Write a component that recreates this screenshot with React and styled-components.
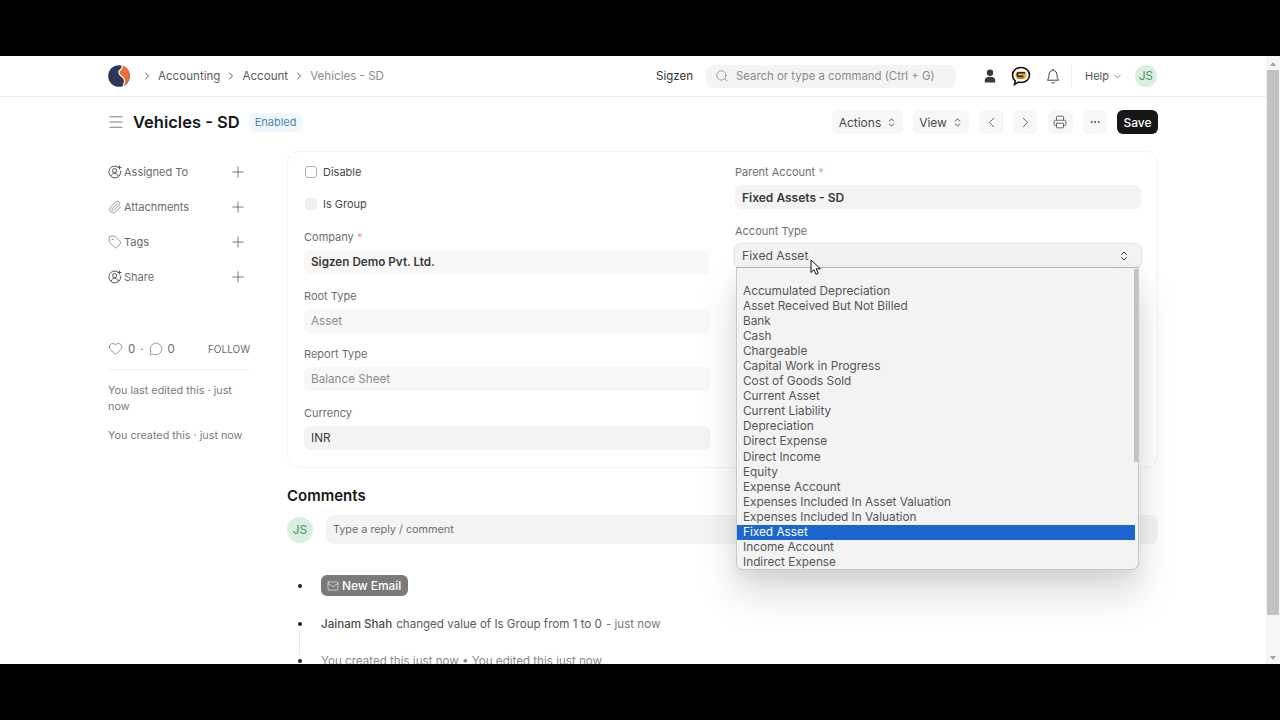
import React from 'react';
import styled, { createGlobalStyle } from 'styled-components';
import {
  ChevronDown, ChevronLeft, ChevronRight, ChevronsUpDown, Heart, Mail, Menu,
  MessageCircle, MoreHorizontal, Paperclip, Plus, Printer, Search, Tag,
} from 'lucide-react';

const GlobalStyle = createGlobalStyle`
  html, body { margin: 0; padding: 0; height: 100%; background: #000; }
  #root { height: 100%; }
  * { box-sizing: border-box; }
  body { font-family: Inter, "Liberation Sans", sans-serif; font-size: 12px; color: #525252; }
`;

const Frame = styled.div`
  width: 1280px;
  height: 720px;
  display: flex;
  flex-direction: column;
  background: #000;
  overflow: hidden;
`;

const Letterbox = styled.div`
  height: 56px;
  flex: none;
  background: #000;
`;

const Viewport = styled.div`
  height: 608px;
  display: flex;
  background: #fff;
  overflow: hidden;
`;

const Content = styled.div`
  flex: 1;
  min-width: 0;
`;

const Scrollbar = styled.div`
  width: 14px;
  flex: none;
  background: #f5f5f5;
  display: flex;
  flex-direction: column;
  align-items: center;
  padding: 6px 1px 4px;
`;

const ScrollArrow = styled.div`
  width: 0;
  height: 0;
  border-left: 3px solid transparent;
  border-right: 3px solid transparent;
  ${p => p.$down ? 'border-top: 4px solid #a3a3a3;' : 'border-bottom: 4px solid #a3a3a3;'}
`;

const ScrollThumb = styled.div`
  width: 12px;
  height: 545px;
  margin: 4px 0 auto;
  background: #c2c2c2;
`;

const Navbar = styled.header`
  height: 41px;
  display: flex;
  align-items: center;
  padding: 0 109px 0 108px;
  border-bottom: 1px solid #ededed;
`;

const Logo = styled.svg`
  width: 22px;
  height: 22px;
  flex: none;
  margin-right: 11px;
`;

const Crumb = styled.a`
  display: flex;
  align-items: center;
  gap: 5px;
  margin-right: 5px;
  font-size: 11.6px;
  color: ${p => p.$current ? '#8c8c8c' : '#5c5c5c'};

  svg { color: #525252; }
`;

const NavRight = styled.div`
  margin-left: auto;
  display: flex;
  align-items: center;
`;

const Company = styled.span`
  color: #333;
  font-size: 11.5px;
  margin-right: 13px;
`;

const SearchBox = styled.div`
  width: 250px;
  height: 23px;
  display: flex;
  align-items: center;
  gap: 7px;
  padding-left: 9px;
  margin-right: 27px;
  border-radius: 8px;
  background: #f4f4f4;
  color: #8a8a8a;
  font-size: 11.4px;
`;

const NavIcons = styled.div`
  display: flex;
  align-items: center;
  gap: 14px;
  padding-right: 10px;
  margin-right: 13px;
  height: 24px;
  border-right: 1px solid #f0f0f0;
`;

const HelpLink = styled.span`
  display: flex;
  align-items: center;
  gap: 3px;
  margin-right: 12px;
  color: #525252;
  font-size: 11px;
`;

const Avatar = styled.div`
  width: ${p => p.$size}px;
  height: ${p => p.$size}px;
  flex: none;
  border-radius: 50%;
  background: #d9efe0;
  color: #4b8f6a;
  display: flex;
  align-items: center;
  justify-content: center;
  font-size: ${p => p.$size > 24 ? 12 : 11.5}px;
`;

const PageHead = styled.div`
  height: 50px;
  display: flex;
  align-items: center;
  padding: 0 108px 0 107px;
`;

const Title = styled.h1`
  margin: 0 9px 0 8px;
  font-size: 16.5px;
  font-weight: 600;
  color: #171717;
`;

const Badge = styled.span`
  height: 19px;
  padding: 0 6px;
  display: flex;
  align-items: center;
  border-radius: 6px;
  background: #f1f8fd;
  color: #4d87b5;
  font-size: 11px;
`;

const Actions = styled.div`
  margin-left: auto;
  display: flex;
  align-items: center;
  gap: 9.6px;
`;

const Button = styled.button`
  height: 24px;
  width: ${p => p.$width}px;
  padding: 0;
  display: flex;
  align-items: center;
  justify-content: center;
  gap: 5px;
  border: 0;
  border-radius: 6px;
  background: ${p => p.$primary ? '#171717' : '#f7f7f7'};
  color: ${p => p.$primary ? '#fff' : '#4a4a4a'};
  font: ${p => p.$primary ? 500 : 400} 12px Inter, sans-serif;
`;

const Layout = styled.div`
  display: flex;
  padding-left: 108px;
  width: 1158px;
`;

const Sidebar = styled.aside`
  width: 142px;
  flex: none;
  margin-right: 37px;
  padding-top: 16px;
`;

const SideRow = styled.div`
  height: 18px;
  margin-bottom: 17px;
  display: flex;
  align-items: center;
  font-size: 11px;
  color: #6b6b6b;

  & > svg:first-child { margin-right: 2px; flex: none; }
  & > svg:last-child { margin-left: auto; margin-right: 3px; color: #525252; }
`;

const Stats = styled.div`
  margin-top: 55px;
  padding-bottom: 13px;
  display: flex;
  align-items: center;
  color: #6b6b6b;
  font-size: 11.5px;
  border-bottom: 1px solid #f0f0f0;

  svg { margin-right: 5px; }
`;

const Dot = styled.span`
  margin: 0 5px;
`;

const Follow = styled.span`
  margin-left: auto;
  font-size: 10px;
  color: #6b6b6b;
`;

const SideNote = styled.p`
  margin: 13px 0 0;
  font-size: 10.8px;
  line-height: 16px;
  color: #7a7a7a;
`;

const Main = styled.main`
  flex: 1;
  min-width: 0;
`;

const Card = styled.section`
  height: 317px;
  margin-top: 4px;
  padding: 11px 16px;
  display: grid;
  grid-template-columns: 406px 406px;
  column-gap: 25px;
  border: 1px solid #f5f5f5;
  border-radius: 12px;
`;

const Column = styled.div`
  display: flex;
  flex-direction: column;
  padding-top: ${p => p.$top ?? 0}px;
`;

const CheckRow = styled.label`
  height: 18px;
  margin-bottom: ${p => p.$gap}px;
  padding-left: 1px;
  display: flex;
  align-items: center;
  gap: 6px;
  font-size: 11px;
  color: #4a4a4a;
`;

const CheckBox = styled.span`
  width: 12px;
  height: 12px;
  border-radius: 3px;
  background: ${p => p.$disabled ? '#f0f0f0' : '#fff'};
  border: 1px solid ${p => p.$disabled ? '#f0f0f0' : '#b0b0b0'};
`;

const Field = styled.div`
  position: relative;
  margin-bottom: ${p => p.$gap ?? 13.6}px;
`;

const Label = styled.div`
  height: 16px;
  line-height: 16px;
  margin-bottom: 5px;
  font-size: 11px;
  color: #6e6e6e;

  b { color: #e79a9a; font-weight: 400; }
`;

const Input = styled.div`
  height: 24px;
  padding: 0 7px;
  display: flex;
  align-items: center;
  justify-content: space-between;
  border-radius: 6px;
  background: ${p => p.$light ? '#f8f8f8' : '#f4f4f4'};
  color: ${p => p.$muted ? '#8c8c8c' : '#383838'};
  font-size: ${p => p.$large ? 12 : 11.7}px;
  font-weight: ${p => p.$bold ? 600 : 400};
`;

const SelectBox = styled(Input)`
  height: 23px;
  background: #f3f3f3;
  color: #525252;
  font-size: 12.1px;
  padding-right: 11px;
  box-shadow: 0 0 0 1px #e4e4e4, 0 1px 3px rgba(0, 0, 0, 0.12);
`;

const Cursor = styled.svg`
  position: absolute;
  left: 75px;
  top: 36px;
  z-index: 6;
`;

const Dropdown = styled.div`
  position: absolute;
  z-index: 5;
  top: 44px;
  left: 1px;
  width: 403px;
  height: 303px;
  padding-top: 16px;
  overflow: hidden;
  border-radius: 0 0 7px 7px;
  background: #f3f3f3;
  border: 1px solid #c9c9c9;
  border-top-color: #b5b5b5;
  box-shadow: 0 24px 40px rgba(0, 0, 0, 0.14), 0 8px 16px rgba(0, 0, 0, 0.06);
`;

const DropdownThumb = styled.div`
  position: absolute;
  top: 1px;
  right: 0;
  width: 4px;
  height: 193px;
  background: #c4c4c4;
`;

const Option = styled.div`
  height: 15.05px;
  line-height: 15px;
  width: 398px;
  padding-left: 6px;
  font-size: 11.8px;
  color: ${p => p.$selected ? '#fff' : '#555'};
  background: ${p => p.$selected ? '#1b66d0' : 'transparent'};
`;

const SectionTitle = styled.h2`
  margin: 19px 0 10px;
  font-size: 15px;
  line-height: 18px;
  font-weight: 600;
  color: #171717;
`;

const CommentRow = styled.div`
  display: flex;
  align-items: center;
  gap: 13px;
`;

const CommentInput = styled.div`
  flex: 1;
  height: 29px;
  padding-left: 7px;
  display: flex;
  align-items: center;
  border-radius: 8px;
  background: #f4f4f4;
  color: #6e6e6e;
  font-size: 10.8px;
`;

const Timeline = styled.ul`
  list-style: none;
  margin: 31px 0 0;
  padding: 0;
`;

const TimelineItem = styled.li`
  position: relative;
  min-height: 21px;
  margin-bottom: ${p => p.$gap}px;
  padding-left: 34px;
  display: flex;
  align-items: center;
  font-size: 11.6px;
  color: ${p => p.$faded ? '#8a8a8a' : '#5c5c5c'};

  &::before {
    content: '';
    position: absolute;
    left: 11px;
    top: 9px;
    width: 4px;
    height: 4px;
    border-radius: 50%;
    background: #222;
  }
`;

const TimelineLine = styled.span`
  position: absolute;
  left: 12px;
  top: 16px;
  width: 1px;
  height: 26px;
  background: #e8e8e8;
`;

const EmailButton = styled.button`
  height: 21px;
  padding: 0 7px 0 6px;
  display: flex;
  align-items: center;
  gap: 3px;
  border: 0;
  border-radius: 6px;
  background: #7a7a7a;
  color: #fff;
  font: 500 11.9px Inter, sans-serif;
`;

const Strong = styled.span`
  font-weight: 500;
  color: #4a4a4a;
  margin-right: 4px;
`;

const Faded = styled.span`
  color: #7a7a7a;
  margin-left: 4px;
`;

const AccountTypes = [
  'Accumulated Depreciation', 'Asset Received But Not Billed', 'Bank', 'Cash', 'Chargeable',
  'Capital Work in Progress', 'Cost of Goods Sold', 'Current Asset', 'Current Liability',
  'Depreciation', 'Direct Expense', 'Direct Income', 'Equity', 'Expense Account',
  'Expenses Included In Asset Valuation', 'Expenses Included In Valuation', 'Fixed Asset',
  'Income Account', 'Indirect Expense',
];

function UserPlusIcon() {
  return (
    <svg width="14" height="14" viewBox="0 0 14 14" fill="none" stroke="#555" strokeWidth="1">
      <path d="M11 2.600A6 6 0 1 0 12.800 6" strokeLinecap="round" />
      <circle cx="6.600" cy="5.600" r="2.100" />
      <path d="M3 11c.8-1.800 2-2.600 3.600-2.600S9.500 9.200 10.200 11" />
      <path d="M11.500 1v3M10 2.500h3" strokeLinecap="round" />
    </svg>
  );
}

function ChatIcon() {
  return (
    <svg width="20" height="20" viewBox="0 0 20 20" fill="none">
      <path d="M10 1.500c4.700 0 8.500 3.300 8.500 7.500s-3.800 7.500-8.500 7.500c-.9 0-1.800-.1-2.600-.4L3.500 18.500l.7-3.700C2.500 13.400 1.500 11.300 1.500 9c0-4.200 3.800-7.500 8.500-7.500z" fill="#fff" stroke="#111" strokeWidth="1.600" />
      <rect x="4.500" y="5.500" width="11" height="7.500" rx="3" fill="#e8b23a" />
      <path d="M14 6.700H8a1.800 1.800 0 0 0 0 3.600h4.500" stroke="#222" strokeWidth="1.500" />
      <path d="M7 12h5.500" stroke="#c9541f" strokeWidth="1.300" />
    </svg>
  );
}

function BellIcon() {
  return (
    <svg width="16" height="17" viewBox="0 0 16 17" fill="none" stroke="#404040" strokeWidth="1">
      <path d="M8 2.500c-2.500 0-4 1.800-4 4.300 0 3-.8 4.300-1.700 5.400h11.400c-.9-1.100-1.700-2.400-1.700-5.400 0-2.500-1.500-4.300-4-4.300z" strokeLinejoin="round" />
      <path d="M6.500 14.200c.4.700.9 1 1.500 1s1.100-.3 1.500-1" strokeLinecap="round" />
      <circle cx="8" cy="2" r="1.300" fill="#4ba36f" stroke="none" />
    </svg>
  );
}

function App() {
  return (
    <Frame>
      <GlobalStyle />
      <Letterbox />
      <Viewport>
        <Content>
          <Navbar>
            <Logo viewBox="0 0 22 22">
              <circle cx="11" cy="11" r="10.800" fill="#2d3558" />
              <path d="M13.500.5C18.500 1.500 22 6 21.800 11c-.2 4.500-3 8-6.800 9.700 1.700-2.400 2-5 .6-7.200-1.100-1.800-3-2.800-4-4.200-1.100-1.600-.5-3.500.7-4.500.8-.7 1.400-1.200 1.700-2 .3-.8.100-1.600-.5-2.300z" fill="#ee7038" />
              <path d="M13.500.5c.6.700.8 1.500.5 2.300-.3.800-.9 1.300-1.700 2-1.200 1-1.800 2.900-.7 4.500 1 1.400 2.900 2.400 4 4.200 1.400 2.200 1.100 4.800-.6 7.200" fill="none" stroke="#fff" strokeWidth="1.200" />
            </Logo>
            <Crumb><ChevronRight size={12} />Accounting</Crumb>
            <Crumb><ChevronRight size={12} />Account</Crumb>
            <Crumb $current><ChevronRight size={12} />Vehicles - SD</Crumb>
            <NavRight>
              <Company>Sigzen</Company>
              <SearchBox><Search size={14} strokeWidth={1.4} />Search or type a command (Ctrl + G)</SearchBox>
              <NavIcons>
                <svg width="14" height="14" viewBox="0 0 14 14" fill="#3a3a3a">
                  <circle cx="7" cy="3.800" r="3.200" />
                  <path d="M1.800 13.500V11c0-2 1.800-3.300 5.200-3.300S12.200 9 12.200 11v2.500z" />
                </svg>
                <ChatIcon />
                <BellIcon />
              </NavIcons>
              <HelpLink>Help<ChevronDown size={11} strokeWidth={1.4} /></HelpLink>
              <Avatar $size={22}>JS</Avatar>
            </NavRight>
          </Navbar>

          <PageHead>
            <Menu size={18} strokeWidth={1} />
            <Title>Vehicles - SD</Title>
            <Badge>Enabled</Badge>
            <Actions>
              <Button $width={71}>Actions<ChevronsUpDown size={11} /></Button>
              <Button $width={56}>View<ChevronsUpDown size={11} /></Button>
              <Button $width={25}><ChevronLeft size={17} strokeWidth={1.2} /></Button>
              <Button $width={25}><ChevronRight size={17} strokeWidth={1.2} /></Button>
              <Button $width={25}><Printer size={14} strokeWidth={1.3} /></Button>
              <Button $width={25}><MoreHorizontal size={12} /></Button>
              <Button $width={41} $primary>Save</Button>
            </Actions>
          </PageHead>

          <Layout>
            <Sidebar>
              <SideRow><UserPlusIcon />Assigned To<Plus size={18} strokeWidth={1} /></SideRow>
              <SideRow><Paperclip size={14} strokeWidth={1.2} />Attachments<Plus size={18} strokeWidth={1} /></SideRow>
              <SideRow><Tag size={14} strokeWidth={1.2} />Tags<Plus size={18} strokeWidth={1} /></SideRow>
              <SideRow><UserPlusIcon />Share<Plus size={18} strokeWidth={1} /></SideRow>
              <Stats>
                <Heart size={15} strokeWidth={1.1} />0<Dot>·</Dot><MessageCircle size={14} strokeWidth={1.1} />0
                <Follow>FOLLOW</Follow>
              </Stats>
              <SideNote>You last edited this · just now</SideNote>
              <SideNote>You created this · just now</SideNote>
            </Sidebar>

            <Main>
              <Card>
                <Column>
                  <CheckRow $gap={14}><CheckBox />Disable</CheckRow>
                  <CheckRow $gap={16}><CheckBox $disabled />Is Group</CheckRow>
                  <Field><Label>Company <b>*</b></Label><Input $light $bold>Sigzen Demo Pvt. Ltd.</Input></Field>
                  <Field><Label>Root Type</Label><Input $light $muted>Asset</Input></Field>
                  <Field><Label>Report Type</Label><Input $light $muted>Balance Sheet</Input></Field>
                  <Field><Label>Currency</Label><Input>INR</Input></Field>
                </Column>
                <Column $top={1}>
                  <Field $gap={14}><Label>Parent Account <b>*</b></Label><Input $bold $large>Fixed Assets - SD</Input></Field>
                  <Field>
                    <Label>Account Type</Label>
                    <SelectBox>Fixed Asset<ChevronsUpDown size={12} color="#333" /></SelectBox>
                    <Cursor width="12" height="17" viewBox="0 0 12 17">
                      <path d="M1 1v12.500l3-2.800 2 4.600 2.200-1-2-4.500h4.200z" fill="#fff" stroke="#111" strokeWidth="1" strokeLinejoin="round" />
                    </Cursor>
                    <Dropdown>
                      <DropdownThumb />
                      {AccountTypes.map(t => (
                        <Option key={t} $selected={t === 'Fixed Asset'}>{t}</Option>
                      ))}
                    </Dropdown>
                  </Field>
                </Column>
              </Card>

              <SectionTitle>Comments</SectionTitle>
              <CommentRow>
                <Avatar $size={26}>JS</Avatar>
                <CommentInput>Type a reply / comment</CommentInput>
              </CommentRow>

              <Timeline>
                <TimelineItem $gap={17}>
                  <EmailButton><Mail size={12} strokeWidth={1.2} />New Email</EmailButton>
                </TimelineItem>
                <TimelineItem $gap={16}>
                  <TimelineLine />
                  <Strong>Jainam Shah</Strong>changed value of Is Group from 1 to 0<Faded>- just now</Faded>
                </TimelineItem>
                <TimelineItem $faded $gap={0}>You created this just now • You edited this just now</TimelineItem>
              </Timeline>
            </Main>
          </Layout>
        </Content>
        <Scrollbar>
          <ScrollArrow />
          <ScrollThumb />
          <ScrollArrow $down />
        </Scrollbar>
      </Viewport>
      <Letterbox />
    </Frame>
  );
}

export default App;
